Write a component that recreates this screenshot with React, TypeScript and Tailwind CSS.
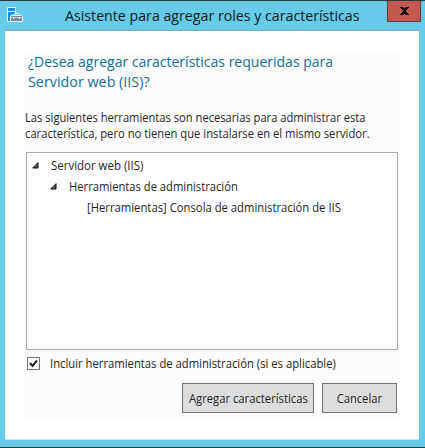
import React from "react";

function ServerIcon() {
  return (
    <svg width="17" height="17" viewBox="0 0 17 17" className="mt-[6px] block shrink-0">
      <path d="M0.500 14.500V0.500h8V7M0.500 14.500H3" fill="none" stroke="#e9f7fc" />
      <path d="M1 1h7v3H1zM1 5h7v2H5L3 9v5H1z" fill="#1e8ad6" />
      <path d="M1 4.500h7" stroke="#e9f7fc" />
      <path d="M6.500 8.500V7.500l1-1h4l1 1v1" fill="none" stroke="#e9f7fc" />
      <path d="M3.500 14.500V9.500l1-1h10l1 1v5z" fill="#718b99" stroke="#e9f7fc" />
      <path d="M4 10.500h2M7 10.500h5M13 10.500h2" stroke="#c3d2d9" />
      <path d="M6.500 10v2M12.500 10v2" stroke="#e9f7fc" />
    </svg>
  );
}

function Expander() {
  return (
    <svg width="7" height="7" viewBox="0 0 7 7" className="block shrink-0">
      <path d="M6 0.700V6H0.700z" fill="#595959" stroke="#111" />
    </svg>
  );
}

export default function App() {
  return (
    <main className="flex h-[448px] w-[425px] flex-col overflow-hidden border-y border-[#30343b] bg-[#66cae9] font-['Open_Sans','Noto_Sans',sans-serif] text-[#1e1e1e]">
      <header className="flex h-[29px] shrink-0 items-start pl-[7px] pr-[4px]">
        <ServerIcon />
        <h1 className="ml-[41px] mt-[4px] w-[300px] whitespace-nowrap text-[15px] leading-[20px] text-[#10191c]">
          <span className="inline-block origin-left scale-x-[0.946]">Asistente para agregar roles y características</span>
        </h1>
        <button aria-label="Cerrar" className="ml-auto flex h-[21px] w-[34px] shrink-0 items-center justify-center border border-t-0 border-[#633c42] bg-[#c4594f]">
          <svg width="9" height="8" viewBox="0 0 9 8" className="ml-px block">
            <path d="M0 0h3.500v1h2V0H9v1H8v1H7v1H6v2h1v1h1v1h1v1H5.500V7h-2v1H0V7h1V6h1V5h1V3H2V2H1V1H0z" fill="#080808" />
          </svg>
        </button>
      </header>
      <section className="mx-[5px] mr-[6px] h-[410px] shrink-0 border-b border-t border-t-[#75a8bd] border-b-[#d7e0e4] bg-white pl-[20px] pr-[15px] pt-[20px]">
        <div className="h-[368px] w-[374px] bg-[#fcfcfc]">
          <h2 className="ml-[3px] h-[40px] whitespace-nowrap text-[15px] leading-[20px] text-[#0e7096]">
            <span className="block w-max origin-left scale-x-[0.934]">¿Desea agregar características requeridas para</span>
            <span className="block w-max origin-left scale-x-[0.955]">Servidor web (IIS)?</span>
          </h2>
          <p className="mt-[19px] h-[32px] whitespace-nowrap text-[12px] leading-[16px]">
            <span className="block w-max origin-left scale-x-[0.93]">Las siguientes herramientas son necesarias para administrar esta</span>
            <span className="block w-max origin-left scale-x-[0.936]">característica, pero no tienen que instalarse en el mismo servidor.</span>
          </p>
          <div className="ml-[1px] mt-[10px] h-[198px] w-[372px] border border-[#a8a8a8] bg-white pt-[2px] text-[12px] leading-[21px]">
            <div className="flex items-center pl-[5px]"><Expander /><span className="ml-[12px] inline-block origin-left scale-x-[0.955]">Servidor web (IIS)</span></div>
            <div className="flex items-center pl-[23px]"><Expander /><span className="ml-[12px] inline-block origin-left scale-x-[0.934]">Herramientas de administración</span></div>
            <div className="flex pl-[60px]"><span className="inline-block origin-left scale-x-[0.94]">[Herramientas] Consola de administración de IIS</span></div>
          </div>
          <label className="ml-[2px] mt-[6px] flex h-[16px] items-center text-[12px] leading-[16px]">
            <span className="-mt-px flex h-[13px] w-[13px] items-center justify-center border border-[#707070] bg-white">
              <svg width="9" height="9" viewBox="0 0 9 9"><path d="M1 4L3.500 7 8 1.500" fill="none" stroke="#1e1e1e" strokeWidth="2" /></svg>
            </span>
            <span className="ml-[10px] inline-block origin-left scale-x-[0.939] whitespace-nowrap">Incluir herramientas de administración (si es aplicable)</span>
          </label>
          <div className="mt-[11px] flex justify-end gap-[8px] pr-[2px] text-[12px]">
            <button className="flex h-[30px] w-[132px] items-center justify-center whitespace-nowrap border border-[#707070] bg-[#ddd] pt-[2px]"><span className="inline-block scale-x-[0.937]">Agregar características</span></button>
            <button className="flex h-[30px] w-[75px] items-center justify-center whitespace-nowrap border border-[#707070] bg-[#ddd] pt-[2px]"><span className="inline-block scale-x-[0.93]">Cancelar</span></button>
          </div>
        </div>
      </section>
    </main>
  );
}
